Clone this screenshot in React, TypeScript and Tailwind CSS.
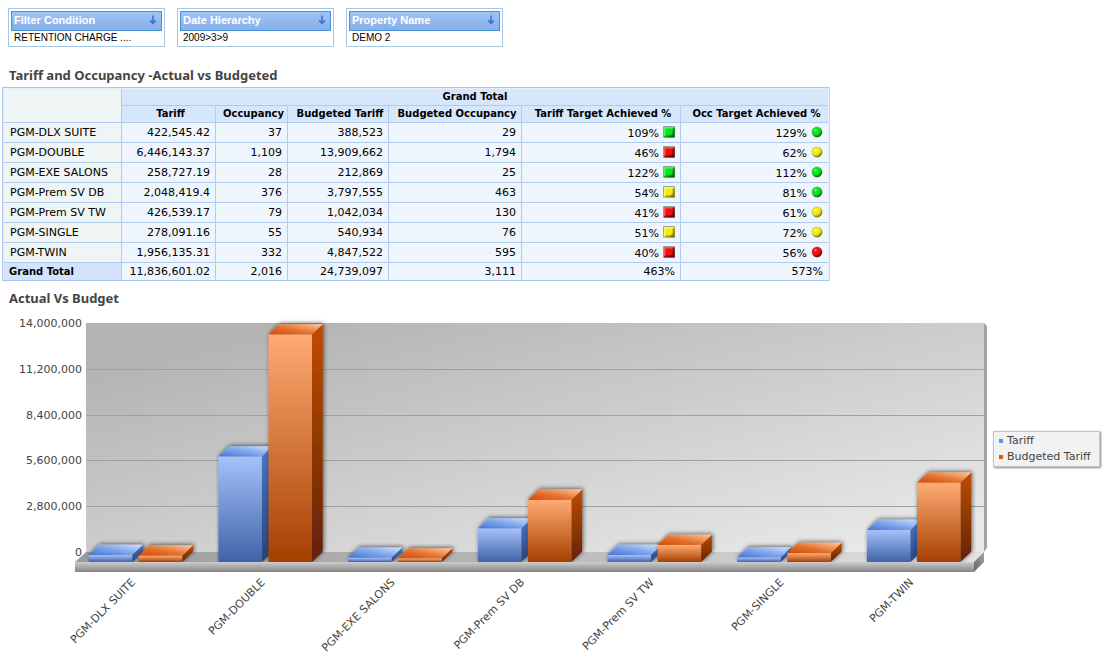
import { useId } from "react";

type Status = "green" | "yellow" | "red";

interface PropertyRow {
  name: string;
  tariff: number;
  occupancy: string;
  budgetedTariff: number;
  budgetedOccupancy: string;
  tariffTarget: string;
  tariffStatus: Status;
  occTarget: string;
  occStatus: Status;
}

const filters = [
  { label: "Filter Condition", value: "RETENTION CHARGE ...." },
  { label: "Date Hierarchy", value: "2009>3>9" },
  { label: "Property Name", value: "DEMO 2" },
];

const rows: PropertyRow[] = [
  { name: "PGM-DLX SUITE", tariff: 422545.42, occupancy: "37", budgetedTariff: 388523, budgetedOccupancy: "29", tariffTarget: "109%", tariffStatus: "green", occTarget: "129%", occStatus: "green" },
  { name: "PGM-DOUBLE", tariff: 6446143.37, occupancy: "1,109", budgetedTariff: 13909662, budgetedOccupancy: "1,794", tariffTarget: "46%", tariffStatus: "red", occTarget: "62%", occStatus: "yellow" },
  { name: "PGM-EXE SALONS", tariff: 258727.19, occupancy: "28", budgetedTariff: 212869, budgetedOccupancy: "25", tariffTarget: "122%", tariffStatus: "green", occTarget: "112%", occStatus: "green" },
  { name: "PGM-Prem SV DB", tariff: 2048419.4, occupancy: "376", budgetedTariff: 3797555, budgetedOccupancy: "463", tariffTarget: "54%", tariffStatus: "yellow", occTarget: "81%", occStatus: "green" },
  { name: "PGM-Prem SV TW", tariff: 426539.17, occupancy: "79", budgetedTariff: 1042034, budgetedOccupancy: "130", tariffTarget: "41%", tariffStatus: "red", occTarget: "61%", occStatus: "yellow" },
  { name: "PGM-SINGLE", tariff: 278091.16, occupancy: "55", budgetedTariff: 540934, budgetedOccupancy: "76", tariffTarget: "51%", tariffStatus: "yellow", occTarget: "72%", occStatus: "yellow" },
  { name: "PGM-TWIN", tariff: 1956135.31, occupancy: "332", budgetedTariff: 4847522, budgetedOccupancy: "595", tariffTarget: "40%", tariffStatus: "red", occTarget: "56%", occStatus: "red" },
];

const columns = [
  "Tariff",
  "Occupancy",
  "Budgeted Tariff",
  "Budgeted Occupancy",
  "Tariff Target Achieved %",
  "Occ Target Achieved %",
];

const totals = ["11,836,601.02", "2,016", "24,739,097", "3,111", "463%", "573%"];

const statusColors: Record<Status, { light: string; base: string; dark: string }> = {
  green: { light: "#8dff96", base: "#08e31c", dark: "#04500c" },
  yellow: { light: "#ffffb0", base: "#f2ea10", dark: "#6b6200" },
  red: { light: "#ff8a84", base: "#ee1111", dark: "#4a0000" },
};

const formatNumber = (value: number) => value.toLocaleString("en-US");

function FilterBox({ label, value }: { label: string; value: string }) {
  return (
    <div className="w-[157px] border border-[#a3c9e4] bg-white p-[2px]">
      <button
        type="button"
        className="flex h-5 w-full items-center justify-between border border-[#4594d8] bg-linear-to-b from-[#9dc4fa] to-[#8aaee6] pr-1 pb-[2px] pl-[2px] text-[11px] leading-4 font-bold text-white"
      >
        {label}
        <svg width="8" height="10" viewBox="0 0 8 10" aria-hidden="true">
          <path d="M4 0.5V8M1.2 5.4L4 8.4L6.8 5.4" fill="none" stroke="#3f78cc" strokeWidth="1.7" />
        </svg>
      </button>
      <div className="pt-px pl-[3px] text-[10px] leading-3 text-black">{value}</div>
    </div>
  );
}

function StatusIcon({ status, shape }: { status: Status; shape: "square" | "circle" }) {
  const id = useId();
  const { light, base, dark } = statusColors[status];

  return (
    <svg width="12" height="12" viewBox="0 0 12 12" role="img" aria-label={status} className="mb-1 shrink-0">
      {shape === "circle" ? (
        <>
          <defs>
            <radialGradient id={id} cx="0.36" cy="0.32" r="0.72">
              <stop offset="0" stopColor={light} />
              <stop offset="0.25" stopColor={base} />
              <stop offset="0.6" stopColor={base} />
              <stop offset="1" stopColor={dark} />
            </radialGradient>
          </defs>
          <circle cx="6" cy="6" r="5.2" fill={`url(#${id})`} stroke="#8a8a8a" strokeOpacity="0.5" strokeWidth="0.6" />
        </>
      ) : (
        <>
          <defs>
            <linearGradient id={id} x1="0" y1="0" x2="1" y2="1">
              <stop offset="0" stopColor={base} />
              <stop offset="0.65" stopColor={base} />
              <stop offset="1" stopColor={dark} />
            </linearGradient>
          </defs>
          <rect x="0.5" y="0.5" width="11" height="11" fill={`url(#${id})`} />
          <path d="M12 0.8L9.6 3V9.4H3L0.8 11.6H12Z" fill={dark} fillOpacity="0.6" />
          <path d="M0.5 11.5V0.5H11.5" fill="none" stroke="#8d9a8d" strokeOpacity="0.85" />
          <path d="M1 10.5V1H11L9.5 2.5H2.5V9Z" fill={light} fillOpacity="0.55" />
        </>
      )}
    </svg>
  );
}

function TariffTable() {
  const line = "border-r border-b border-[#b1cbf0] last:border-r-0";
  const head = `${line} bg-[#d6e6fb] text-[10px] font-bold`;
  const cell = `${line} bg-[#eef5fd] pr-[5px] text-right`;

  return (
    <div className="ml-[2px] w-[828px] max-w-full overflow-x-auto border border-[#a9c6ee] border-r-[#c9dbf4] bg-[#e3edfb] px-px pt-px">
      <table className="w-full table-fixed border-separate border-spacing-0 font-[DejaVu_Sans,Verdana,sans-serif] text-[11px] leading-4 text-black">
        <colgroup>
          <col className="w-[118px]" />
          <col className="w-[94px]" />
          <col className="w-[72px]" />
          <col className="w-[101px]" />
          <col className="w-[133px]" />
          <col className="w-[159px]" />
          <col className="w-[147px]" />
        </colgroup>
        <thead>
          <tr className="h-[17px]">
            <td rowSpan={2} className={`${line} bg-[#eff5f5] p-0`} />
            <th colSpan={6} scope="colgroup" className={`${head} p-0`}>
              Grand Total
            </th>
          </tr>
          <tr className="h-[17px]">
            {columns.map((column) => (
              <th key={column} scope="col" className={`${head} p-0 pl-1 whitespace-nowrap`}>
                {column}
              </th>
            ))}
          </tr>
        </thead>
        <tbody>
          {rows.map((row) => (
            <tr key={row.name} className="h-5">
              <th scope="row" className={`${line} bg-[#eff5f5] py-0 pl-[6px] text-left font-normal whitespace-nowrap`}>
                {row.name}
              </th>
              <td className={cell}>{formatNumber(row.tariff)}</td>
              <td className={cell}>{row.occupancy}</td>
              <td className={cell}>{formatNumber(row.budgetedTariff)}</td>
              <td className={cell}>{row.budgetedOccupancy}</td>
              <td className={cell}>
                <span className="flex h-[19px] items-end justify-end gap-1">
                  {row.tariffTarget}
                  <StatusIcon status={row.tariffStatus} shape="square" />
                </span>
              </td>
              <td className={cell}>
                <span className="flex h-[19px] items-end justify-end gap-1">
                  {row.occTarget}
                  <StatusIcon status={row.occStatus} shape="circle" />
                </span>
              </td>
            </tr>
          ))}
        </tbody>
        <tfoot>
          <tr className="h-[17px]">
            <th scope="row" className="border-r border-[#b1cbf0] bg-[#d2e3fb] pl-[5px] text-left text-[10px] font-bold">
              Grand Total
            </th>
            {totals.map((total, index) => (
              <td key={index} className="border-r border-[#b1cbf0] bg-[#eef5fd] pr-[5px] text-right last:border-r-0">
                {total}
              </td>
            ))}
          </tr>
        </tfoot>
      </table>
    </div>
  );
}

// chart geometry, in viewBox units
const AXIS_MAX = 14000000;
const TICKS = [14000000, 11200000, 8400000, 5600000, 2800000, 0];
const WALL_TOP = 13;
const WALL_HEIGHT = 229;
const FLOOR_Y = 252;
const BAR_WIDTH = 43.5;
const DEPTH_X = 10.7;
const DEPTH_Y = 10.3;
const GROUP_STEP = 129.7;

function Bar({ x, value, color }: { x: number; value: number; color: "blue" | "orange" }) {
  const height = Math.max((value / AXIS_MAX) * WALL_HEIGHT, 3.4);
  const top = FLOOR_Y - height;
  const right = x + BAR_WIDTH;

  return (
    <g filter="url(#bar-shadow)">
      <polygon
        points={`${right},${top} ${right + DEPTH_X},${top - DEPTH_Y} ${right + DEPTH_X},${FLOOR_Y - DEPTH_Y} ${right},${FLOOR_Y}`}
        fill={`url(#${color}-side)`}
      />
      <polygon
        points={`${x},${top} ${x + DEPTH_X},${top - DEPTH_Y} ${right + DEPTH_X},${top - DEPTH_Y} ${right},${top}`}
        fill={`url(#${color}-top)`}
      />
      <rect x={x} y={top} width={BAR_WIDTH} height={height} fill={`url(#${color}-front)`} />
    </g>
  );
}

function BudgetChart() {
  return (
    <svg
      viewBox="0 0 990 347"
      role="img"
      aria-label="Actual Vs Budget"
      className="h-auto min-w-0 flex-1 font-[DejaVu_Sans,Verdana,sans-serif] text-[11px]"
    >
      <defs>
        <linearGradient id="wall" gradientUnits="userSpaceOnUse" x1="99" y1="55" x2="190" y2="410">
          <stop offset="0" stopColor="#b3b3b3" />
          <stop offset="1" stopColor="#e8e8e8" />
        </linearGradient>
        <linearGradient id="floor" x1="0" y1="0" x2="1" y2="0">
          <stop offset="0" stopColor="#9c9c9c" />
          <stop offset="0.5" stopColor="#b8b8b8" />
          <stop offset="1" stopColor="#e4e4e4" />
        </linearGradient>
        <linearGradient id="floor-front" x1="0" y1="0" x2="0" y2="1">
          <stop offset="0" stopColor="#cdcdcd" />
          <stop offset="1" stopColor="#858585" />
        </linearGradient>
        <linearGradient id="floor-side" x1="0" y1="1" x2="1" y2="0">
          <stop offset="0" stopColor="#666666" />
          <stop offset="1" stopColor="#a4a4a4" />
        </linearGradient>
        <linearGradient id="blue-front" x1="0" y1="0" x2="0" y2="1">
          <stop offset="0" stopColor="#a5c2fa" />
          <stop offset="1" stopColor="#3f63a8" />
        </linearGradient>
        <linearGradient id="blue-top" x1="0" y1="1" x2="1" y2="0">
          <stop offset="0" stopColor="#4374d4" />
          <stop offset="0.5" stopColor="#7fa6ec" />
          <stop offset="1" stopColor="#d3e1ff" />
        </linearGradient>
        <linearGradient id="blue-side" x1="0" y1="0" x2="0" y2="1">
          <stop offset="0" stopColor="#4b78c8" />
          <stop offset="1" stopColor="#294278" />
        </linearGradient>
        <linearGradient id="orange-front" x1="0" y1="0" x2="0" y2="1">
          <stop offset="0" stopColor="#ffab74" />
          <stop offset="1" stopColor="#a63f00" />
        </linearGradient>
        <linearGradient id="orange-top" x1="0" y1="1" x2="1" y2="0">
          <stop offset="0" stopColor="#d44a00" />
          <stop offset="0.45" stopColor="#e3712e" />
          <stop offset="1" stopColor="#ffc7a2" />
        </linearGradient>
        <linearGradient id="orange-side" x1="0" y1="0" x2="0" y2="1">
          <stop offset="0" stopColor="#c24a00" />
          <stop offset="0.5" stopColor="#8f3a00" />
          <stop offset="1" stopColor="#641f0c" />
        </linearGradient>
        <filter id="bar-shadow" x="-30%" y="-60%" width="160%" height="220%">
          <feDropShadow dx="1" dy="-1" stdDeviation="2.2" floodColor="#000000" floodOpacity="0.6" />
        </filter>
        <clipPath id="above-floor">
          <rect x="0" y="0" width="990" height="252" />
        </clipPath>
      </defs>

      <polygon points="984,13 987,16 987,238 984,242" fill="#a3a3a3" />
      <rect x="86" y={WALL_TOP} width="898" height={WALL_HEIGHT} fill="url(#wall)" />
      {TICKS.slice(1, 5).map((tick) => {
        const y = Math.round(WALL_TOP + (1 - tick / AXIS_MAX) * WALL_HEIGHT) + 0.5;
        return <line key={tick} x1="86" x2="984" y1={y} y2={y} stroke="#a0a0a0" />;
      })}
      {TICKS.map((tick) => (
        <text
          key={tick}
          x="82"
          y={Math.round(WALL_TOP + (1 - tick / AXIS_MAX) * WALL_HEIGHT) + 4}
          textAnchor="end"
          fill="#444444"
        >
          {formatNumber(tick)}
        </text>
      ))}

      <polygon points="86,242 984,242 974,252 75,252" fill="url(#floor)" />
      <rect x="75" y="252" width="899" height="10" fill="url(#floor-front)" />
      <polygon points="974,252 984,242 984,252 974,262" fill="url(#floor-side)" />

      <g clipPath="url(#above-floor)">
        {rows.map((row, index) => (
          <g key={row.name}>
            <Bar x={88.7 + index * GROUP_STEP} value={row.tariff} color="blue" />
            <Bar x={138.8 + index * GROUP_STEP} value={row.budgetedTariff} color="orange" />
          </g>
        ))}
      </g>

      {rows.map((row, index) => (
        <text
          key={row.name}
          transform={`translate(${136 + index * GROUP_STEP} 273) rotate(-45)`}
          textAnchor="end"
          fill="#444444"
        >
          {row.name}
        </text>
      ))}
    </svg>
  );
}

function Legend() {
  return (
    <ul className="mt-[121px] w-[107px] shrink-0 border border-[#c4c4c4] bg-[#f2f2f2] py-px pl-[5px] font-[DejaVu_Sans,Verdana,sans-serif] text-[11px] leading-4 text-[#444444] shadow-[1px_1px_2px_#888888]">
      <li className="flex items-center gap-1 whitespace-nowrap">
        <span className="size-1 bg-[#5b97ee]" />
        Tariff
      </li>
      <li className="flex items-center gap-1 whitespace-nowrap">
        <span className="size-1 bg-[#dd5a0a]" />
        Budgeted Tariff
      </li>
    </ul>
  );
}

export default function App() {
  const heading = "pb-1 pl-[9px] font-[Noto_Sans,Tahoma,sans-serif] text-[13px] leading-4 font-bold text-[#444444]";

  return (
    <main className="bg-white font-[Liberation_Sans,Arial,sans-serif]">
      <div className="flex flex-wrap gap-3 pt-2 pl-2">
        {filters.map((filter) => (
          <FilterBox key={filter.label} label={filter.label} value={filter.value} />
        ))}
      </div>

      <section className="pt-5">
        <h2 className={heading}>Tariff and Occupancy -Actual vs Budgeted</h2>
        <TariffTable />
      </section>

      <section className="pt-[9px]">
        <h2 className={heading}>Actual Vs Budget</h2>
        <div className="flex items-start gap-[3px] pr-1">
          <BudgetChart />
          <Legend />
        </div>
      </section>
    </main>
  );
}
